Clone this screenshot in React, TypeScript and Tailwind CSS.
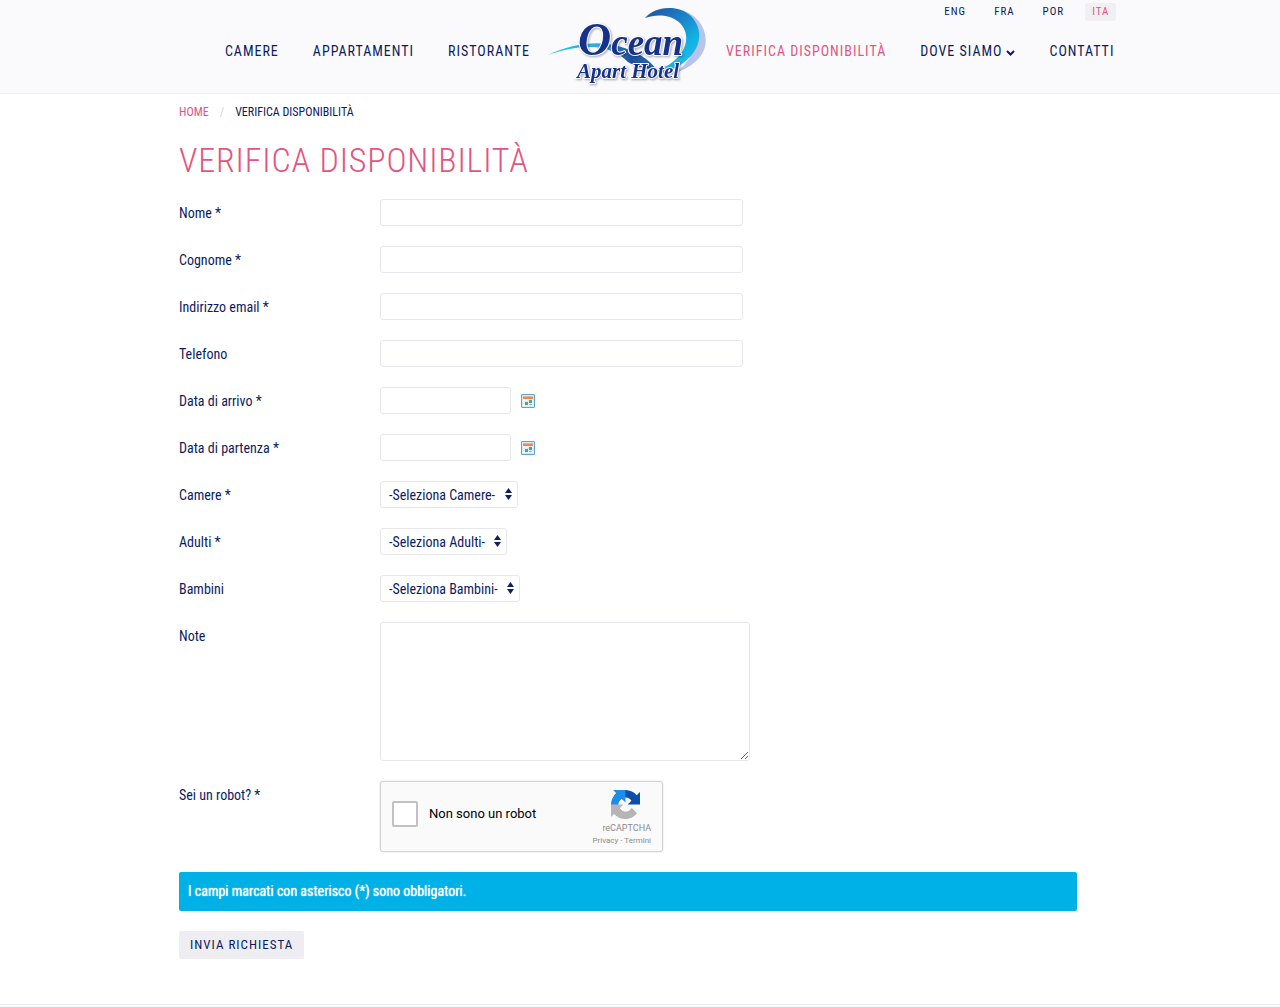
import type { ReactNode } from "react";

const navLink = "flex items-center gap-1 px-[17px] leading-5";

function Logo() {
  return (
    <svg viewBox="0 0 162 86" className="h-[86px] w-[162px]" role="img" aria-label="Ocean Apart Hotel">
      <defs>
        <linearGradient id="wave" x1="0" y1="0" x2="0.7" y2="1">
          <stop offset="0" stopColor="#1f4f9e" />
          <stop offset="0.4" stopColor="#1c7fc6" />
          <stop offset="0.75" stopColor="#0fb4e4" />
          <stop offset="1" stopColor="#2fb9e6" />
        </linearGradient>
        <linearGradient id="tail" x1="0" y1="0" x2="1" y2="0">
          <stop offset="0" stopColor="#12cdea" />
          <stop offset="0.5" stopColor="#3aa5dd" />
          <stop offset="0.75" stopColor="#1d4f9f" />
          <stop offset="1" stopColor="#2b6cb8" />
        </linearGradient>
      </defs>
      <path d="M112 5C132 1 150 10 156 24C164 43 154 60 128 69C142 59 150 45 148 30C145 15 130 6 112 5Z" fill="#b9c3ea" />
      <path d="M98 14C108 2 131 0 144 12C160 29 153 54 122 67C117 69 112 69 109 67C129 60 141 45 139 31C137 15 117 7 98 14Z" fill="url(#wave)" />
      <path d="M1 51C24 40 50 36 71 42C89 47 101 54 111 67C96 64 88 62 81 58C72 49 60 43 43 43C28 43 15 46 1 51Z" fill="url(#tail)" />
      <g
        className="font-['Liberation_Serif'] font-bold italic drop-shadow-[1px_1px_1px_#00000055]"
        fill="#16318a"
        stroke="#ffffff"
        strokeWidth="2"
        paintOrder="stroke"
        strokeLinejoin="round"
      >
        <text x="31" y="51" fontSize="37">
          <tspan fontSize="46">O</tspan>cean
        </text>
        <text x="30" y="74" fontSize="21">Apart Hotel</text>
      </g>
    </svg>
  );
}

function CalendarIcon() {
  return (
    <svg viewBox="0 0 14 14" className="size-[14px]" aria-hidden="true">
      <rect x="0.5" y="0.5" width="13" height="13" rx="0.5" fill="#d5eafa" stroke="#5aa3db" />
      <rect x="2" y="2" width="10" height="3" fill="#f3854a" />
      <rect x="2" y="2" width="10" height="1" fill="#f9b183" />
      <rect x="2" y="5" width="10" height="7" fill="#f4fafd" />
      <path d="M2 7.5H12M2 9.5H12M4.5 5V12M7 5V12M9.5 5V12" stroke="#c9dff0" strokeWidth="0.6" />
      <rect x="8" y="6" width="3" height="3" fill="#58a86b" />
      <rect x="4" y="8" width="3" height="3" fill="#58a86b" />
      <rect x="8" y="10" width="3" height="1" fill="#7fbce6" />
    </svg>
  );
}

function RecaptchaIcon() {
  return (
    <svg viewBox="0 0 64 64" className="size-[29px]" aria-hidden="true">
      <path fill="#0c4fa8" d="M64 31.955l-.033-1.37V4.687l-7.16 7.16C50.948 4.674 42.033.093 32.05.093c-10.4 0-19.622 4.96-25.458 12.64l11.736 11.86a15.55 15.55 0 0 1 4.754-5.334c2.05-1.6 4.952-2.906 8.968-2.906.485 0 .86.057 1.135.163 4.976.393 9.288 3.14 11.828 7.124l-8.307 8.307L64 31.953" />
      <path fill="#1c8deb" d="M31.862.094l-1.37.033H4.594l7.16 7.16C4.58 13.147 0 22.06 0 32.046c0 10.4 4.96 19.622 12.64 25.458L24.5 45.768a15.55 15.55 0 0 1-5.334-4.754c-1.6-2.05-2.906-4.952-2.906-8.968 0-.485.057-.86.163-1.135.393-4.976 3.14-9.288 7.124-11.828l8.307 8.307L31.86.095" />
      <path fill="#b5b5b5" d="M.001 32.045l.033 1.37v25.898l7.16-7.16c5.86 7.173 14.774 11.754 24.76 11.754 10.4 0 19.622-4.96 25.458-12.64l-11.736-11.86a15.55 15.55 0 0 1-4.754 5.334c-2.05 1.6-4.952 2.906-8.968 2.906-.485 0-.86-.057-1.135-.163-4.976-.393-9.288-3.14-11.828-7.124l8.307-8.307c-10.522.04-22.4.066-27.295-.005" />
    </svg>
  );
}

function Row({ id, label, children }: { id: string; label: string; children: ReactNode }) {
  return (
    <div className="flex items-start">
      <label htmlFor={id} className="w-[201px] shrink-0 pt-1 leading-5">
        {label}
      </label>
      {children}
    </div>
  );
}

const field = "h-[27px] rounded-[3px] border border-[#e8e8ec] bg-white px-2 outline-none";

function TextRow({ id, label, type = "text" }: { id: string; label: string; type?: string }) {
  return (
    <Row id={id} label={label}>
      <input id={id} type={type} className={`${field} w-full max-w-[363px]`} />
    </Row>
  );
}

function DateRow({ id, label }: { id: string; label: string }) {
  return (
    <Row id={id} label={label}>
      <input id={id} type="text" className={`${field} w-[131px]`} />
      <button type="button" aria-label={`Calendario: ${label}`} className="ml-[10px] flex h-[27px] items-center">
        <CalendarIcon />
      </button>
    </Row>
  );
}

function SelectRow({ id, label, option }: { id: string; label: string; option: string }) {
  return (
    <Row id={id} label={label}>
      <div className="relative">
        <select id={id} className="h-[27px] appearance-none rounded-[3px] border border-[#e8e8ec] bg-white pr-[21px] pl-2 outline-none">
          <option>{option}</option>
        </select>
        <svg viewBox="0 0 7 12" className="pointer-events-none absolute top-[7px] right-[6px] h-3 w-[7px]" aria-hidden="true">
          <path d="M0 5L3.500 0L7 5ZM0 7L3.500 12L7 7Z" fill="#0d1f6b" />
        </svg>
      </div>
    </Row>
  );
}

export default function App() {
  return (
    <div className="bg-white font-['Roboto_Condensed',Roboto,sans-serif] text-sm text-[#0d1b5e]">
      <header className="grid grid-cols-[1fr_auto_1fr] border-b border-[#f0f0f2] bg-[#fafafc] pr-6 tracking-[1px]">
        <nav aria-label="Principale" className="flex items-start justify-end pt-[41px]">
          <a href="#camere" className={navLink}>CAMERE</a>
          <a href="#appartamenti" className={navLink}>APPARTAMENTI</a>
          <a href="#ristorante" className={navLink}>RISTORANTE</a>
        </nav>
        <a href="#home" className="pt-1 pb-[3px] tracking-normal">
          <Logo />
        </a>
        <div className="flex flex-col items-end justify-self-start pt-[3px]">
          <ul className="flex gap-[14px] pr-[15px] text-[11px] leading-[18px]">
            <li><a href="#eng" className="block px-[7px]">ENG</a></li>
            <li><a href="#fra" className="block px-[7px]">FRA</a></li>
            <li><a href="#por" className="block px-[7px]">POR</a></li>
            <li><a href="#ita" className="block rounded-[3px] bg-[#f0f0f2] px-[7px] text-[#e2557f]">ITA</a></li>
          </ul>
          <nav aria-label="Secondaria" className="flex items-start pt-5">
            <a href="#verifica" className={`${navLink} text-[#e2557f]`}>VERIFICA DISPONIBILITÀ</a>
            <a href="#dove-siamo" className={navLink}>
              DOVE SIAMO
              <svg viewBox="0 0 9 6" className="mt-1 h-[6px] w-[9px]" aria-hidden="true">
                <path d="M1 1L4.500 4.500L8 1" fill="none" stroke="#0d1b5e" strokeWidth="2" />
              </svg>
            </a>
            <a href="#contatti" className={navLink}>CONTATTI</a>
          </nav>
        </div>
      </header>

      <div className="pr-6 pb-[45px]">
        <main className="mx-auto max-w-[898px]">
          <nav aria-label="Percorso" className="flex gap-[11px] pt-2 text-xs leading-5">
            <a href="#home" className="text-[#e2557f]">HOME</a>
            <span className="text-[#d5d5dc]">/</span>
            <span>VERIFICA DISPONIBILITÀ</span>
          </nav>
          <h1 className="pt-4 text-[34px] leading-[44px] font-light tracking-wide text-[#e2557f]">VERIFICA DISPONIBILITÀ</h1>

          <form className="flex flex-col gap-5 pt-[17px]">
            <TextRow id="nome" label="Nome *" />
            <TextRow id="cognome" label="Cognome *" />
            <TextRow id="email" label="Indirizzo email *" type="email" />
            <TextRow id="telefono" label="Telefono" type="tel" />
            <DateRow id="arrivo" label="Data di arrivo *" />
            <DateRow id="partenza" label="Data di partenza *" />
            <SelectRow id="camere" label="Camere *" option="-Seleziona Camere-" />
            <SelectRow id="adulti" label="Adulti *" option="-Seleziona Adulti-" />
            <SelectRow id="bambini" label="Bambini" option="-Seleziona Bambini-" />
            <Row id="note" label="Note">
              <textarea id="note" className="h-[139px] w-full max-w-[370px] resize rounded-[3px] border border-[#e8e8ec] bg-white p-2 outline-none" />
            </Row>
            <Row id="robot" label="Sei un robot? *">
              <div className="flex h-[71px] w-[283px] items-start rounded-[3px] border border-[#d3d3d3] bg-[#fafafa] px-[11px] font-[Roboto] shadow-[0_0_2px_#00000026]">
                <input id="robot" type="checkbox" className="mt-[19px] size-[26px] appearance-none rounded-[2px] border-2 border-[#c1c1c1] bg-white" />
                <label htmlFor="robot" className="mt-[22px] ml-[11px] grow text-[13px] leading-5 text-black">Non sono un robot</label>
                <div className="mt-2 flex flex-col items-end text-[#8a8a8a]">
                  <span className="pr-[11px]"><RecaptchaIcon /></span>
                  <span className="pt-[3px] text-[9px] leading-3">reCAPTCHA</span>
                  <span className="text-[8px] leading-[14px]">
                    <a href="#privacy">Privacy</a> - <a href="#termini">Termini</a>
                  </span>
                </div>
              </div>
            </Row>
            <p className="rounded-[2px] bg-[#00b1e7] px-[9px] py-[10px] leading-[19px] text-white [text-shadow:0_0_1px_#ffffff]">
              I campi marcati con asterisco (*) sono obbligatori.
            </p>
            <div>
              <button type="submit" className="rounded-[2px] bg-[#eeeef2] px-[11px] py-1 text-[13px] leading-5 tracking-[1px]">INVIA RICHIESTA</button>
            </div>
          </form>
        </main>
      </div>
      <footer className="border-t border-[#ececee] bg-[#fafafc] py-px" />
    </div>
  );
}
